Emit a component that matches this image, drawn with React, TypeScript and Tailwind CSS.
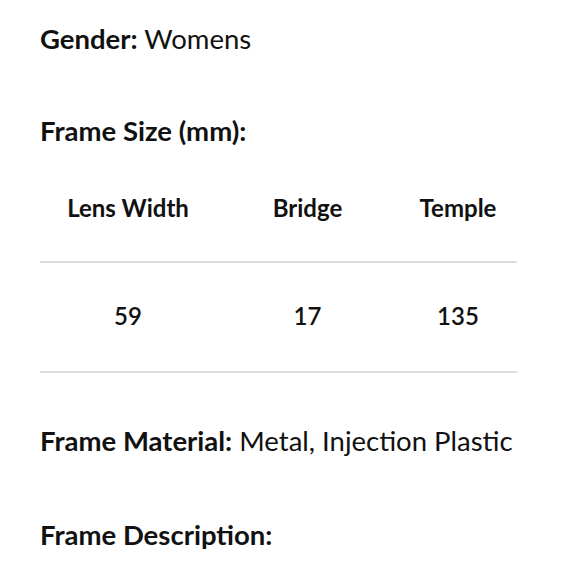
import React from "react";

export default function App() {
  const font = { fontFamily: "Lato, 'Noto Sans', sans-serif" };
  return (
    <div className="w-[580px] h-[580px] bg-white text-[#111111] overflow-hidden" style={font}>
      <div className="pl-[40px] pt-[19px]">
        <p className="text-[27.5px] leading-[40px]">
          <span className="font-bold">Gender:</span> Womens
        </p>
        <p className="mt-[52px] text-[27.5px] leading-[40px] font-bold">Frame Size (mm):</p>
        <div className="mt-[37px] w-[477px]">
          <div className="flex h-[75px] text-[24px] leading-[40px] font-bold border-b-2 border-[#dddddd]">
            <div className="w-[176px] text-center">Lens Width</div>
            <div className="w-[183px] text-center">Bridge</div>
            <div className="w-[118px] text-center">Temple</div>
          </div>
          <div className="flex pt-[33px] pb-[35px] text-[24px] leading-[40px] font-semibold border-b-2 border-[#dddddd]">
            <div className="w-[176px] text-center">59</div>
            <div className="w-[183px] text-center">17</div>
            <div className="w-[118px] text-center">135</div>
          </div>
        </div>
        <p className="mt-[48px] text-[27.5px] leading-[40px]">
          <span className="font-bold">Frame Material:</span> Metal, Injection Plastic
        </p>
        <p className="mt-[54px] text-[27.5px] leading-[40px] font-bold">Frame Description:</p>
      </div>
    </div>
  );
}
